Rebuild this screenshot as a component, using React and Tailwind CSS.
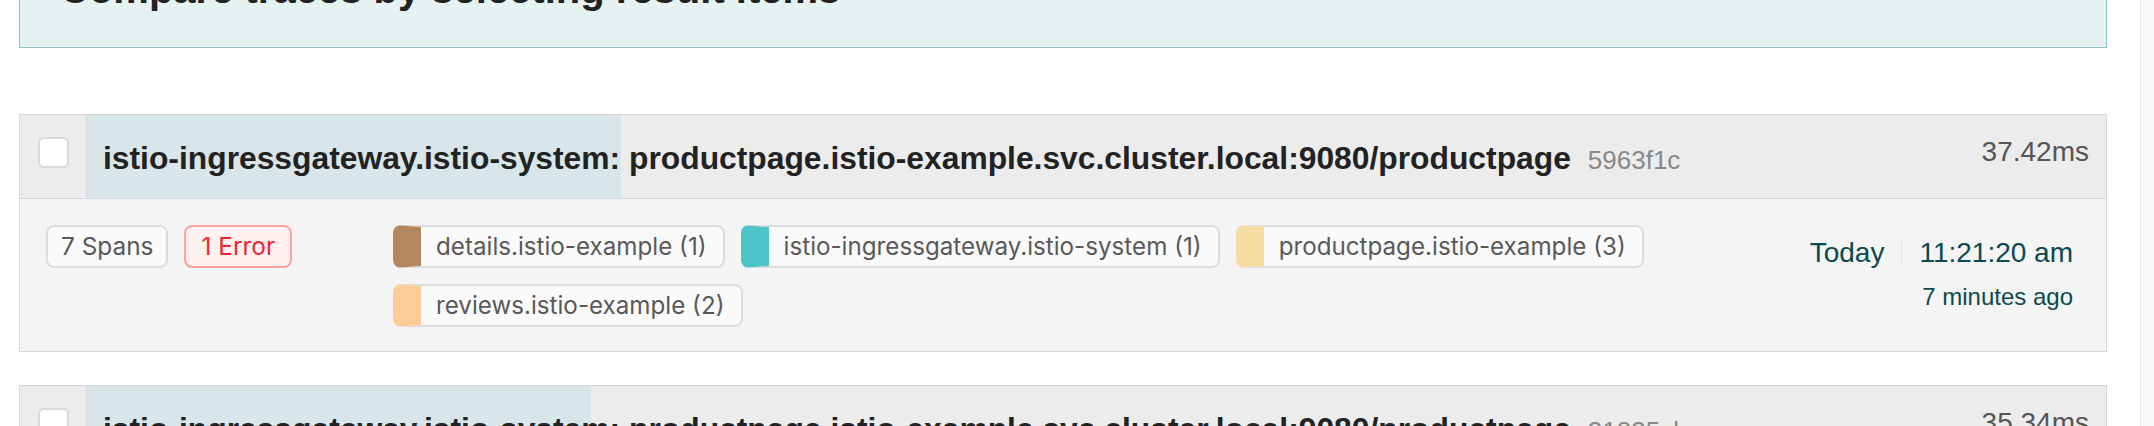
import React from "react"

const MAX_DURATION = 141.48

const traces = [
  {
    id: "5963f1c",
    service: "istio-ingressgateway.istio-system:",
    operation: "productpage.istio-example.svc.cluster.local:9080/productpage",
    duration: 37.42,
    spans: 7,
    errors: 1,
    services: [
      { name: "details.istio-example (1)", color: "border-l-[#b4875f]" },
      { name: "istio-ingressgateway.istio-system (1)", color: "border-l-[#4bc3c8]" },
      { name: "productpage.istio-example (3)", color: "border-l-[#f6dba3]" },
      { name: "reviews.istio-example (2)", color: "border-l-[#ffcc99]" },
    ],
    day: "Today",
    time: "11:21:20 am",
    ago: "7 minutes ago",
  },
  {
    id: "21835cb",
    service: "istio-ingressgateway.istio-system:",
    operation: "productpage.istio-example.svc.cluster.local:9080/productpage",
    duration: 35.34,
    spans: 7,
    errors: 0,
    services: [
      { name: "details.istio-example (1)", color: "border-l-[#b4875f]" },
      { name: "istio-ingressgateway.istio-system (1)", color: "border-l-[#4bc3c8]" },
      { name: "productpage.istio-example (3)", color: "border-l-[#f6dba3]" },
      { name: "reviews.istio-example (2)", color: "border-l-[#ffcc99]" },
    ],
    day: "Today",
    time: "11:21:18 am",
    ago: "7 minutes ago",
  },
]

function TraceCard({ trace }) {
  const pct = (trace.duration / MAX_DURATION) * 100

  return (
    <div className="border border-[#d6d6d6]">
      <div className="flex h-[84px] bg-[#ececec] border-b border-[#d6d6d6]">
        <div className="w-[67px] shrink-0 flex justify-center pt-[22px] border-r border-[#d6d6d6]">
          <span className="block w-[31px] h-[31px] bg-white border-2 border-[#d9d9d9] rounded-[6px]" />
        </div>
        <div className="relative flex-1 flex items-start">
          <div className="absolute inset-y-0 left-0 bg-[#d8e6ea]" style={{ width: `${pct}%` }} />
          <div className="relative flex items-baseline pl-4 pt-[25px] font-['Liberation_Sans',sans-serif] whitespace-nowrap">
            <span className="text-[31.8px] leading-[36px] font-bold text-[#222]">
              {trace.service} {trace.operation}
            </span>
            <span className="ml-[17px] text-[26px] text-[#888]">{trace.id}</span>
          </div>
          <span className="relative ml-auto pr-[17px] pt-[21px] text-[28px] leading-[32px] text-[#555] font-['Liberation_Sans',sans-serif]">
            {trace.duration}ms
          </span>
        </div>
      </div>

      <div className="flex bg-[#f4f4f4] pl-[26px] pr-[33px] pt-[26px] pb-[24px]">
        <div className="w-[347px] shrink-0 flex items-start gap-4 font-['Inter',sans-serif] text-[24.4px]">
          <span className="px-[13px] leading-[39px] border-2 border-[#dcdcdc] bg-[#fafafa] rounded-[8px] text-[#595959]">
            {trace.spans} Spans
          </span>
          {trace.errors > 0 && (
            <span className="px-[15px] leading-[39px] border-2 border-[#ffa39e] bg-[#fff1f0] rounded-[8px] text-[#f5222d]">
              {trace.errors} Error
            </span>
          )}
        </div>

        <div className="w-[1392px] shrink-0 flex flex-wrap content-start gap-4 font-['Inter',sans-serif] text-[24.2px]">
          {trace.services.map((s) => (
            <span
              key={s.name}
              className={`pl-[15px] pr-[16px] leading-[39px] border-2 border-[#dcdcdc] border-l-[28px] ${s.color} bg-[#fafafa] rounded-[8px] text-[#595959]`}
            >
              {s.name}
            </span>
          ))}
        </div>

        <div className="ml-auto flex flex-col items-end pt-[8px] text-[#0b4a50] font-['Liberation_Sans',sans-serif]">
          <div className="flex items-center text-[28px] leading-[40px]">
            <span>{trace.day}</span>
            <span className="w-px h-[24px] mx-[17px] bg-[#e0e0e0]" />
            <span>{trace.time}</span>
          </div>
          <div className="mt-[8px] text-[24px] leading-[32px]">{trace.ago}</div>
        </div>
      </div>
    </div>
  )
}

export default function App() {
  return (
    <div className="flex h-[426px] overflow-hidden bg-white">
      <main className="flex-1 pl-[19px] pr-[33px]">
        <div className="-mt-[32px] pl-[40px] pb-[38px] bg-[#e6f2f2] border border-[#8cc6c6] font-['Liberation_Sans',sans-serif]">
          <h2 className="text-[40px] leading-[40px] font-bold text-[#222]">
            Compare traces by selecting result items
          </h2>
        </div>

        <div className="mt-[66px] flex flex-col gap-[33px]">
          {traces.map((t) => (
            <TraceCard key={t.id} trace={t} />
          ))}
        </div>
      </main>
      <div className="w-[14px] shrink-0 bg-[#fafafa] border-l border-[#e8e8e8]" />
    </div>
  )
}
